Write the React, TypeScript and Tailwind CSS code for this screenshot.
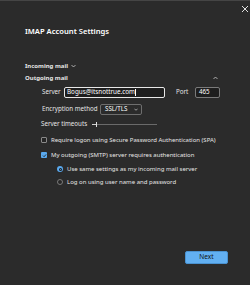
import React from "react";

const font = { fontFamily: '"Noto Sans", "Liberation Sans", sans-serif' };

function Check() {
  return (
    <svg width="5" height="5" viewBox="0 0 10 10" className="block">
      <path d="M2 5.2 L4.2 7.4 L8.2 2.8" fill="none" stroke="#1a1a1a" strokeWidth="1.6" />
    </svg>
  );
}

export default function App() {
  return (
    <div
      className="relative w-[250px] h-[285px] overflow-hidden bg-[#2b2b2b] border-t border-[#454545] text-[#e6e6e6] flex flex-col whitespace-nowrap"
      style={font}
    >
      <div className="absolute right-[1px] top-[4px] w-[8px] h-[8px]">
        <svg width="8" height="8" viewBox="0 0 8 8" className="block">
          <path d="M1 1 L7 7 M7 1 L1 7" stroke="#e0e0e0" strokeWidth="1" />
        </svg>
      </div>

      <div className="mt-[25px] ml-[25px] h-[12px] flex items-center text-[7.6px] font-semibold text-white leading-none">
        IMAP Account Settings
      </div>

      <div className="mt-[23px] ml-[25px] h-[10px] flex items-center gap-[3px] text-[6px] font-bold leading-none">
        <span>Incoming mail</span>
        <svg width="5" height="4" viewBox="0 0 10 6" className="block">
          <path d="M1 1 L5 5 L9 1" fill="none" stroke="#e0e0e0" strokeWidth="1.4" />
        </svg>
      </div>

      <div className="mt-[2px] ml-[25px] mr-[32px] h-[10px] flex items-center justify-between text-[6px] font-bold leading-none">
        <span>Outgoing mail</span>
        <svg width="5" height="4" viewBox="0 0 10 6" className="block">
          <path d="M1 5 L5 1 L9 5" fill="none" stroke="#e0e0e0" strokeWidth="1.4" />
        </svg>
      </div>

      <div className="mt-[4px] ml-[42px] h-[11px] flex items-center text-[6.2px] leading-none">
        <span className="w-[22px] shrink-0">Server</span>
        <div className="w-[101px] shrink-0 h-[11px] rounded-[2px] border border-[#e8e8e8] bg-[#1e1e1e] flex items-center pl-[2px] text-[6.3px] text-white">
          <span>Bogus@itsnottrue.com</span>
          <span className="w-[1px] h-[7px] bg-white" />
        </div>
        <span className="ml-[11px] w-[19px] shrink-0">Port</span>
        <div className="w-[25px] shrink-0 h-[11px] rounded-[2px] border border-[#7a7a7a] bg-[#1e1e1e] flex items-center pl-[3px] text-white">
          465
        </div>
      </div>

      <div className="mt-[6px] ml-[42px] h-[11px] flex items-center text-[6.2px] leading-none">
        <span className="w-[58px] shrink-0">Encryption method</span>
        <div className="w-[42px] shrink-0 h-[11px] rounded-[2px] border border-[#6e6e6e] bg-[#2b2b2b] flex items-center justify-between pl-[4px] pr-[3px] text-white">
          <span>SSL/TLS</span>
          <svg width="4" height="3" viewBox="0 0 10 6" className="block">
            <path d="M1 1 L5 5 L9 1" fill="none" stroke="#e0e0e0" strokeWidth="1.6" />
          </svg>
        </div>
      </div>

      <div className="mt-[4px] ml-[41px] h-[10px] flex items-center text-[6.2px] leading-none">
        <span className="w-[51px] shrink-0">Server timeouts</span>
        <div className="relative w-[65px] h-[6px] flex items-center">
          <div className="w-[4px] h-[1px] bg-[#d0d0d0]" />
          <div className="w-[1px] h-[5px] bg-[#e0e0e0]" />
          <div className="flex-1 h-[1px] bg-[#6a6a6a]" />
        </div>
      </div>

      <div className="mt-[6px] ml-[41px] h-[10px] flex items-center gap-[4px] text-[6px] leading-none">
        <div className="w-[6px] h-[6px] shrink-0 rounded-[1px] border border-[#8a8a8a] bg-[#262626]" />
        <span>Require logon using Secure Password Authentication (SPA)</span>
      </div>

      <div className="mt-[5px] ml-[41px] h-[10px] flex items-center gap-[4px] text-[6px] leading-none">
        <div className="w-[6px] h-[6px] shrink-0 rounded-[1px] bg-[#5aa9ee] flex items-center justify-center">
          <Check />
        </div>
        <span>My outgoing (SMTP) server requires authentication</span>
      </div>

      <div className="mt-[4px] ml-[57px] h-[10px] flex items-center gap-[4px] text-[6px] leading-none">
        <div className="w-[6px] h-[6px] shrink-0 rounded-full bg-[#5aa9ee] flex items-center justify-center">
          <div className="w-[3px] h-[3px] rounded-full bg-[#1e1e1e] flex items-center justify-center">
            <div className="w-[1px] h-[1px] rounded-full bg-[#5aa9ee]" />
          </div>
        </div>
        <span>Use same settings as my incoming mail server</span>
      </div>
      <div className="mt-[3px] ml-[57px] h-[10px] flex items-center gap-[4px] text-[6px] leading-none">
        <div className="w-[6px] h-[6px] shrink-0 rounded-full border border-[#7a7a7a] bg-[#262626]" />
        <span>Log on using user name and password</span>
      </div>

      <div className="mt-auto mb-[21px] mr-[22px] flex justify-end">
        <div className="w-[43px] h-[13px] rounded-[2px] bg-[#62b0f2] border border-[#4a92d0] flex items-center justify-center text-[6.5px] text-[#111] leading-none">
          Next
        </div>
      </div>
    </div>
  );
}
